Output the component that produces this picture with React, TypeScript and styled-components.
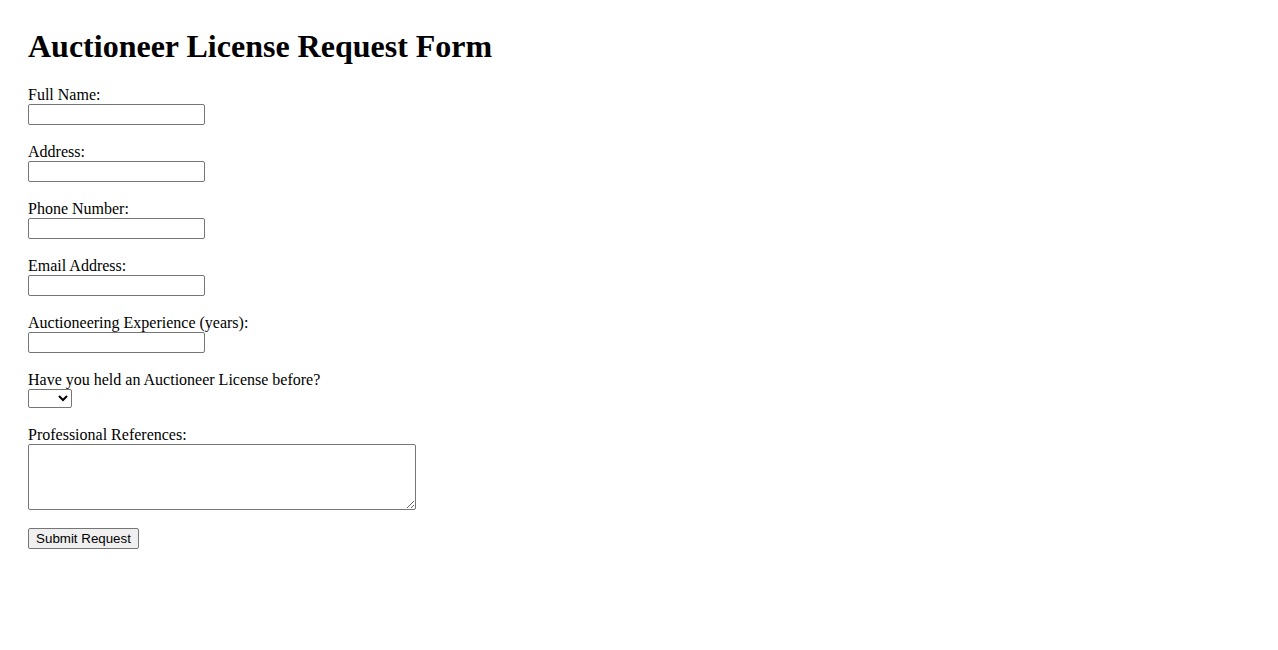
import React from 'react'
import styled, { createGlobalStyle } from 'styled-components'

const GlobalStyle = createGlobalStyle`
  body {
    margin: 8px;
    background: #ffffff;
    color: #000000;
    font-family: "Liberation Serif", "Times New Roman", serif;
    font-size: 16px;
  }
`

const Page = styled.div`
  padding: 20px;
`

const Title = styled.h1`
  margin: 0 0 21px;
  font-size: 32px;
  font-weight: bold;
  line-height: normal;
`

const Form = styled.form`
  display: flex;
  flex-direction: column;
  align-items: flex-start;
`

const Field = styled.div`
  display: flex;
  flex-direction: column;
  align-items: flex-start;
  margin-bottom: 18px;
`

const Label = styled.label`
  display: block;
  line-height: 18px;
`

const controlBase = `
  box-sizing: border-box;
  margin: 0;
  border: 1px solid #767676;
  border-radius: 2px;
  background: #ffffff;
  color: #000000;
  font-family: "Liberation Sans", Arial, sans-serif;
  font-size: 13.333px;
`

const TextInput = styled.input`
  ${controlBase}
  width: 177px;
  height: 21px;
  padding: 1px 2px;
`

const Select = styled.select`
  ${controlBase}
  width: 44px;
  height: 19px;
  padding: 0;
`

const TextArea = styled.textarea`
  ${controlBase}
  width: 388px;
  height: 66px;
  padding: 2px;
  font-family: "Liberation Mono", monospace;
`

const SubmitButton = styled.button`
  ${controlBase}
  width: 111px;
  height: 21px;
  padding: 1px 6px;
  background: #efefef;
`

const textFields = [
  { id: 'fullName', label: 'Full Name:', type: 'text' },
  { id: 'address', label: 'Address:', type: 'text' },
  { id: 'phone', label: 'Phone Number:', type: 'tel' },
  { id: 'email', label: 'Email Address:', type: 'email' },
  { id: 'experience', label: 'Auctioneering Experience (years):', type: 'text' }
]

export default function App() {
  return (
    <>
      <GlobalStyle />
      <Page>
        <Title>Auctioneer License Request Form</Title>
        <Form onSubmit={e => e.preventDefault()}>
          {textFields.map(f => (
            <Field key={f.id}>
              <Label htmlFor={f.id}>{f.label}</Label>
              <TextInput id={f.id} type={f.type} />
            </Field>
          ))}
          <Field>
            <Label htmlFor="heldBefore">Have you held an Auctioneer License before?</Label>
            <Select id="heldBefore" defaultValue="">
              <option value=""></option>
              <option value="yes">Yes</option>
              <option value="no">No</option>
            </Select>
          </Field>
          <Field>
            <Label htmlFor="references">Professional References:</Label>
            <TextArea id="references" rows={4} cols={50} />
          </Field>
          <SubmitButton type="submit">Submit Request</SubmitButton>
        </Form>
      </Page>
    </>
  )
}
